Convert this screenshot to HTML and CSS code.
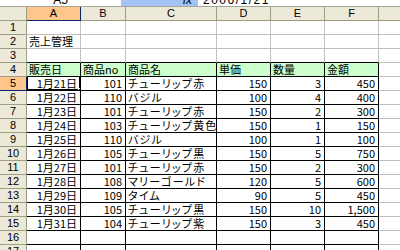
FILE: index.html
```html
<!DOCTYPE html>
<html lang="ja">
<head>
    <meta charset="UTF-8">
    <title>売上管理</title>
    <link rel="stylesheet" href="styles.css">
</head>
<body>
    <div class="formula-bar">
        <div class="name-box"><span>A5</span></div>
        <div class="fx"><span>fx</span></div>
        <div class="value"><span>2006/1/21</span></div>
    </div>

    <table class="sheet">
        <colgroup>
            <col class="w-row">
            <col class="w-a">
            <col class="w-b">
            <col class="w-c">
            <col class="w-d">
            <col class="w-e">
            <col class="w-f">
            <col class="w-g">
        </colgroup>
        <thead>
            <tr>
                <th class="corner"></th>
                <th class="col-sel">A</th>
                <th>B</th>
                <th>C</th>
                <th>D</th>
                <th>E</th>
                <th>F</th>
                <th></th>
            </tr>
        </thead>
        <tbody>
            <tr><th>1</th><td></td><td></td><td></td><td></td><td></td><td></td><td></td></tr>
            <tr><th>2</th><td>売上管理</td><td></td><td></td><td></td><td></td><td></td><td></td></tr>
            <tr class="above"><th>3</th><td></td><td></td><td></td><td></td><td></td><td></td><td></td></tr>
            <tr class="data head">
                <th>4</th><td>販売日</td><td>商品no</td><td>商品名</td><td>単価</td><td>数量</td><td>金額</td><td class="out"></td>
            </tr>
            <tr class="data">
                <th class="row-sel">5</th>
                <td class="num active">1月21日<span class="cursor"></span><span class="handle"></span></td>
                <td class="num">101</td><td class="name">チューリップ赤</td><td class="num">150</td><td class="num">3</td><td class="num">450</td><td class="out"></td>
            </tr>
            <tr class="data">
                <th>6</th><td class="num">1月22日</td><td class="num">110</td><td class="name">バジル</td><td class="num">100</td><td class="num">4</td><td class="num">400</td><td class="out"></td>
            </tr>
            <tr class="data">
                <th>7</th><td class="num">1月23日</td><td class="num">101</td><td class="name">チューリップ赤</td><td class="num">150</td><td class="num">2</td><td class="num">300</td><td class="out"></td>
            </tr>
            <tr class="data">
                <th>8</th><td class="num">1月24日</td><td class="num">103</td><td class="name">チューリップ黄色</td><td class="num">150</td><td class="num">1</td><td class="num">150</td><td class="out"></td>
            </tr>
            <tr class="data">
                <th>9</th><td class="num">1月25日</td><td class="num">110</td><td class="name">バジル</td><td class="num">100</td><td class="num">1</td><td class="num">100</td><td class="out"></td>
            </tr>
            <tr class="data">
                <th>10</th><td class="num">1月26日</td><td class="num">105</td><td class="name">チューリップ黒</td><td class="num">150</td><td class="num">5</td><td class="num">750</td><td class="out"></td>
            </tr>
            <tr class="data">
                <th>11</th><td class="num">1月27日</td><td class="num">101</td><td class="name">チューリップ赤</td><td class="num">150</td><td class="num">2</td><td class="num">300</td><td class="out"></td>
            </tr>
            <tr class="data">
                <th>12</th><td class="num">1月28日</td><td class="num">108</td><td class="name">マリーゴールド</td><td class="num">120</td><td class="num">5</td><td class="num">600</td><td class="out"></td>
            </tr>
            <tr class="data">
                <th>13</th><td class="num">1月29日</td><td class="num">109</td><td class="name">タイム</td><td class="num">90</td><td class="num">5</td><td class="num">450</td><td class="out"></td>
            </tr>
            <tr class="data">
                <th>14</th><td class="num">1月30日</td><td class="num">105</td><td class="name">チューリップ黒</td><td class="num">150</td><td class="num">10</td><td class="num">1,500</td><td class="out"></td>
            </tr>
            <tr class="data">
                <th>15</th><td class="num">1月31日</td><td class="num">104</td><td class="name">チューリップ紫</td><td class="num">150</td><td class="num">3</td><td class="num">450</td><td class="out"></td>
            </tr>
            <tr class="data">
                <th>16</th><td></td><td></td><td></td><td></td><td></td><td></td><td class="out"></td>
            </tr>
            <tr class="data">
                <th>17</th><td></td><td></td><td></td><td></td><td></td><td></td><td class="out"></td>
            </tr>
        </tbody>
    </table>
</body>
</html>
```

FILE: styles.css
```css
* {
    box-sizing: border-box;
}

body {
    margin: 0;
    width: 400px;
    height: 250px;
    overflow: hidden;
    background: #fff;
    font-family: "Noto Sans CJK JP", sans-serif;
    color: #000;
}

/* formula bar, only its lower edge is visible */
.formula-bar {
    display: flex;
    height: 7px;
    overflow: hidden;
    border-bottom: 1px solid #a5a597;
}

.formula-bar > div {
    display: flex;
    align-items: flex-end;
    overflow: hidden;
    font-family: "Liberation Sans", sans-serif;
    font-size: 12px;
}

.formula-bar span {
    line-height: 12px;
    margin-bottom: 0;
}

.name-box {
    width: 121px;
    justify-content: center;
    background: #fff;
}

.fx {
    width: 77px;
    justify-content: flex-end;
    padding-right: 6px;
    background: #a4c2f4;
    font-style: italic;
}

.value {
    flex: 1;
    padding-left: 5px;
    background: #fff;
    font-size: 13px;
    letter-spacing: 1.5px;
}

/* sheet */
.sheet {
    border-collapse: separate;
    border-spacing: 0;
    table-layout: fixed;
    width: 420px;
}

.w-row { width: 27px; }
.w-a { width: 54px; }
.w-b { width: 45px; }
.w-c { width: 91px; }
.w-d { width: 54px; }
.w-e { width: 54px; }
.w-f { width: 54px; }
.w-g { width: 41px; }

.sheet th,
.sheet td {
    height: 14px;
    padding: 0 2px;
    line-height: 13px;
    white-space: nowrap;
    overflow: hidden;
    border-right: 1px solid #c0c0c0;
    border-bottom: 1px solid #c0c0c0;
}

.sheet td {
    font-size: 11px;
    font-feature-settings: "palt";
    text-align: left;
}

.sheet td.name {
    letter-spacing: 1.2px;
}

.sheet th {
    background: #ece9d8;
    border-right-color: #9d9d86;
    border-bottom-color: #9d9d86;
    font-family: "Liberation Sans", sans-serif;
    font-size: 11px;
    font-weight: normal;
    text-align: center;
}

.sheet th.col-sel {
    background: #ffc68c;
    border-right-color: #0a246a;
    border-bottom-color: #0a246a;
}

.sheet th.row-sel {
    background: #ffc68c;
    border-right-color: #0a246a;
    border-bottom-color: #0a246a;
}

.above td {
    border-bottom-color: #000;
}

.above td:last-child {
    border-bottom-color: #c0c0c0;
}

.data td {
    border-right-color: #000;
    border-bottom-color: #000;
}

.data td.out {
    border-right-color: #c0c0c0;
    border-bottom-color: #c0c0c0;
}

.head td {
    background: #ccffcc;
}

.head td.out {
    background: #fff;
}

.sheet td.num {
    text-align: right;
    padding-right: 3px;
}

/* active cell */
.active {
    position: relative;
}

.cursor {
    position: absolute;
    left: -1px;
    top: -2px;
    right: -1px;
    bottom: -1px;
    border: 2px solid #000;
}

.handle {
    position: absolute;
    right: -4px;
    bottom: -4px;
    width: 6px;
    height: 6px;
    background: #000;
    border: 1px solid #fff;
}
```
